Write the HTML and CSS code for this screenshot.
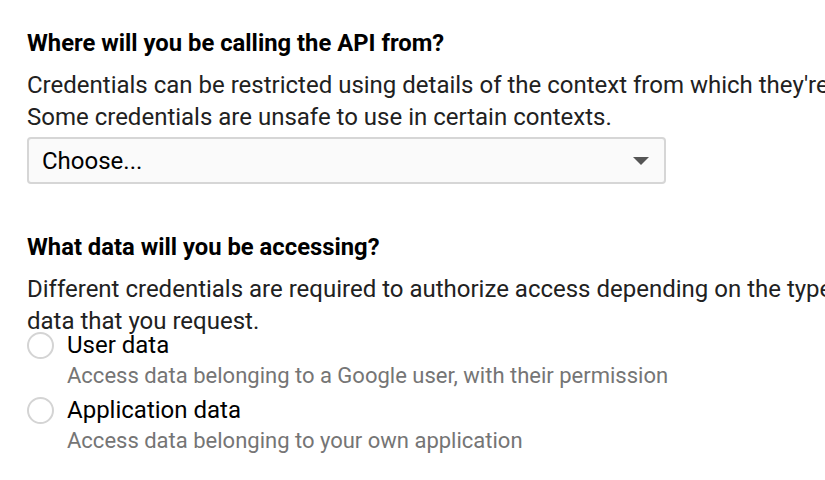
FILE: index.html
```html
<!DOCTYPE html>
<html>
<head>
<meta charset="utf-8">
<link rel="stylesheet" href="styles.css">
</head>
<body>
<div class="page">
  <section class="block first">
    <h2 class="q">Where will you be calling the API from?</h2>
    <p class="help"><span class="line">Credentials can be restricted using details of the context from which they're</span><span class="line">Some credentials are unsafe to use in certain contexts.</span></p>
    <div class="select">
      <span class="select-label">Choose...</span>
      <span class="caret"></span>
    </div>
  </section>
  <section class="block second">
    <h2 class="q">What data will you be accessing?</h2>
    <p class="help"><span class="line">Different credentials are required to authorize access depending on the type of</span><span class="line">data that you request.</span></p>
    <div class="options">
      <label class="option">
        <span class="radio"></span>
        <span class="opt-text">
          <span class="opt-title">User data</span>
          <span class="opt-desc">Access data belonging to a Google user, with their permission</span>
        </span>
      </label>
      <label class="option">
        <span class="radio"></span>
        <span class="opt-text">
          <span class="opt-title">Application data</span>
          <span class="opt-desc">Access data belonging to your own application</span>
        </span>
      </label>
    </div>
  </section>
</div>
</body>
</html>
```
FILE: styles.css
```css
html, body {
  margin: 0;
  padding: 0;
  background: #fff;
  overflow: hidden;
}
body {
  font-family: Roboto, "Liberation Sans", sans-serif;
  color: #212121;
}
.page {
  width: 798px;
  padding: 27px 0 0 27px;
  overflow: hidden;
}
.block {
  display: flex;
  flex-direction: column;
}
.second {
  margin-top: 47px;
}
.q {
  margin: 0;
  font-size: 23.8px;
  line-height: 33px;
  font-weight: 700;
  color: #000;
}
.help {
  margin: 9px 0 0 0;
  font-size: 24px;
  line-height: 32px;
  color: #212121;
}
.second .help {
  margin-top: 9px;
}
.line {
  display: block;
  white-space: nowrap;
}
.select {
  margin-top: 4px;
  box-sizing: border-box;
  width: 639px;
  height: 47px;
  border: 2px solid #d6d6d6;
  border-radius: 4px;
  background: #fafafa;
  display: flex;
  align-items: center;
  justify-content: space-between;
  padding: 0 15px 0 13px;
}
.select-label {
  font-size: 24px;
  color: #000;
}
.caret {
  width: 0;
  height: 0;
  border-left: 8px solid transparent;
  border-right: 8px solid transparent;
  border-top: 8px solid #555;
}
.options {
  margin-top: -7px;
  display: flex;
  flex-direction: column;
  gap: 3px;
}
.option {
  display: flex;
  align-items: flex-start;
  gap: 13px;
}
.radio {
  flex: none;
  box-sizing: border-box;
  width: 27px;
  height: 27px;
  border: 2px solid #d4d4d4;
  border-radius: 50%;
  margin-top: 2px;
}
.opt-text {
  display: flex;
  flex-direction: column;
}
.opt-title {
  font-size: 24px;
  line-height: 31px;
  color: #000;
}
.opt-desc {
  font-size: 22px;
  line-height: 30.5px;
  color: #757575;
}
```
